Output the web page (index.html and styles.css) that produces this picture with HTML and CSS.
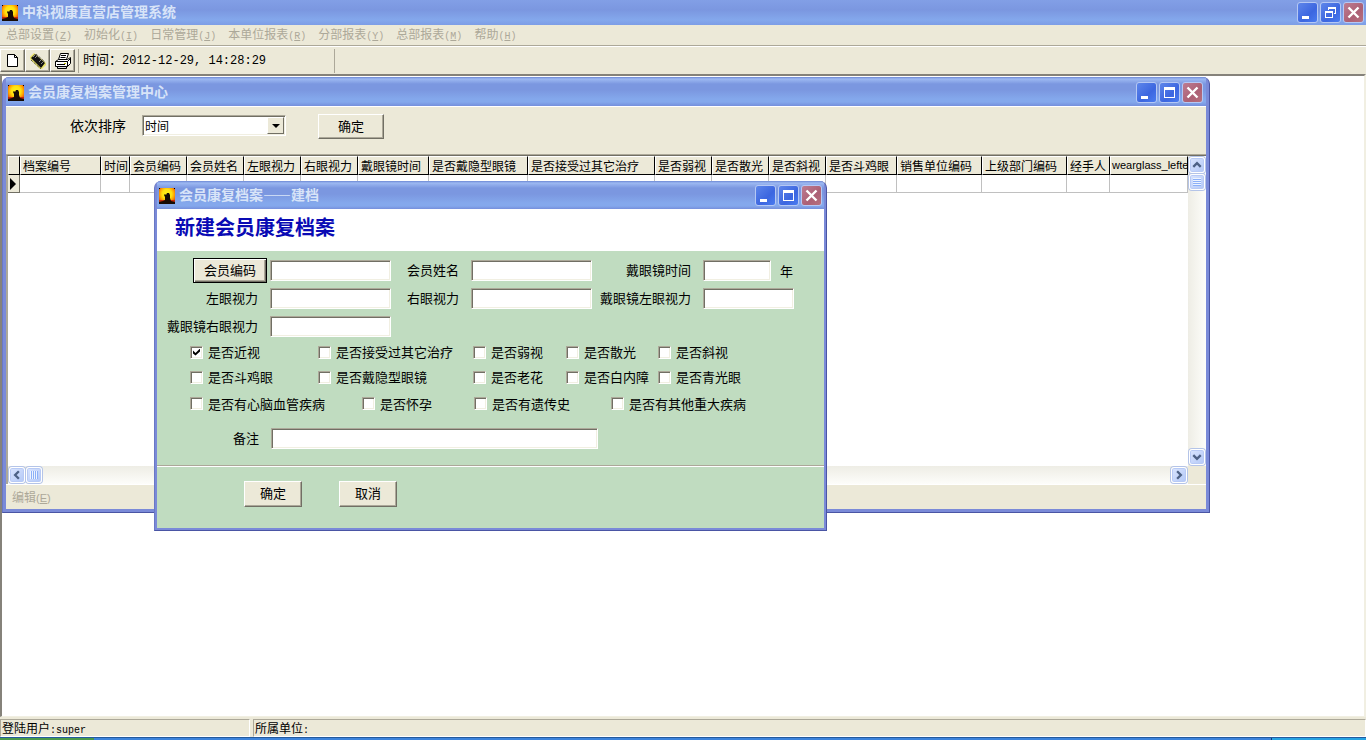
FILE: index.html
```html
<!DOCTYPE html>
<html lang="zh-CN">
<head>
<meta charset="utf-8">
<title>中科视康直营店管理系统</title>
<link rel="stylesheet" href="styles.css">
</head>
<body>
<svg class="defs" aria-hidden="true">
  <defs>
    <radialGradient id="sun" cx="50%" cy="38%" r="60%">
      <stop offset="0" stop-color="#fff21a"/><stop offset=".5" stop-color="#ffe010"/><stop offset=".75" stop-color="#ffa600"/><stop offset="1" stop-color="#e8520c"/>
    </radialGradient>
    <symbol id="logo" viewBox="0 0 16 16">
      <rect width="16" height="16" fill="url(#sun)"/>
      <path d="M0 12h16v4H0z" fill="#c22c0a"/>
      <path d="M0 14l4-1 2-1v-3l-1-2 1-1 1 1 1-2h2l1 2v3l1 3 4 1v2H0z" fill="#160b05"/>
      <path d="M0 0h1v1H0zM15 0h1v1h-1z" fill="#000"/>
    </symbol>
    <symbol id="min" viewBox="0 0 19 19"><path d="M4 13h7v3H4z" fill="#fff"/></symbol>
    <symbol id="max" viewBox="0 0 19 19"><path d="M4 4h11v11H4zM5 7v7h9V7z" fill="#fff" fill-rule="evenodd"/></symbol>
    <symbol id="restore" viewBox="0 0 19 19"><path d="M7 4h8v7h-2v-1h1V6H8v1H7zM4 8h8v7H4zM5 10v4h6v-4z" fill="#fff" fill-rule="evenodd"/></symbol>
    <symbol id="close" viewBox="0 0 19 19"><path d="M4.500 4.500l10 10M14.500 4.500l-10 10" stroke="#fff" stroke-width="2.400"/></symbol>
    <symbol id="chev" viewBox="0 0 15 15"><path d="M3.500 9.500l4-4 4 4" fill="none" stroke="#4d6185" stroke-width="2.500"/></symbol>
  </defs>
</svg>
<div class="app">
  <header class="titlebar titlebar-main">
    <svg class="logo"><use href="#logo"/></svg>
    <h1 class="caption">中科视康直营店管理系统</h1>
    <button class="winbtn" aria-label="最小化"><svg><use href="#min"/></svg></button>
    <button class="winbtn" aria-label="还原"><svg><use href="#restore"/></svg></button>
    <button class="winbtn winbtn-close" aria-label="关闭"><svg><use href="#close"/></svg></button>
  </header>
  <nav class="menubar">
    <button class="menu">总部设置<span class="key">(<u>Z</u>)</span></button>
    <button class="menu">初始化<span class="key">(<u>I</u>)</span></button>
    <button class="menu">日常管理<span class="key">(<u>J</u>)</span></button>
    <button class="menu">本单位报表<span class="key">(<u>R</u>)</span></button>
    <button class="menu">分部报表<span class="key">(<u>Y</u>)</span></button>
    <button class="menu">总部报表<span class="key">(<u>M</u>)</span></button>
    <button class="menu">帮助<span class="key">(<u>H</u>)</span></button>
  </nav>
  <div class="toolbar">
    <button class="tool" aria-label="新建"><svg viewBox="0 0 16 16"><path d="M2.500 1.500h7l3 3v9h-10z" fill="#fff" stroke="#000"/><path d="M9.500 1.500v3h3" fill="none" stroke="#000"/></svg></button>
    <button class="tool" aria-label="设备"><svg viewBox="0 0 16 16"><path d="M0 4l4-4 12 10v2l-4 4h-2L0 6z" fill="#e9e36a"/><path d="M1 5l4-4 10 9-4 5z" fill="#111"/><path d="M3 4l2-2M5 5l2-2M9 9l2-2M11 11l2-2" stroke="#888"/><path d="M1 7l10 9M6 1l9 8" stroke="#222" stroke-dasharray="1 1"/></svg></button>
    <button class="tool" aria-label="打印"><svg class="printer" viewBox="0 0 18 16"><path d="M4.500 6.500l2-6h8l-2 6zM7 2.500h5M6.500 4.500h5" fill="#fff" stroke="#000"/><path d="M1.500 8.500l3-2h9l3-2v6l-3 3h-12z" fill="#fff" stroke="#000"/><path d="M1.500 8.500h12v5M13.500 8.500l3-3M3 11.500h8" fill="none" stroke="#000"/><path d="M3.500 13.500h9v2h-9z" fill="#ddd" stroke="#000"/><path d="M10 10h2v1h-2z" fill="#cc0"/></svg></button>
    <div class="clock">时间：<span class="clock-value">2012-12-29, 14:28:29</span></div>
  </div>
  <main class="desktop">
    <section class="window window-records">
      <header class="titlebar">
        <svg class="logo"><use href="#logo"/></svg>
        <h2 class="caption">会员康复档案管理中心</h2>
        <button class="winbtn" aria-label="最小化"><svg><use href="#min"/></svg></button>
        <button class="winbtn" aria-label="最大化"><svg><use href="#max"/></svg></button>
        <button class="winbtn winbtn-close" aria-label="关闭"><svg><use href="#close"/></svg></button>
      </header>
      <div class="sortbar">
        <label class="sort-label" for="sort">依次排序</label>
        <div class="combo">
          <select id="sort"><option>时间</option></select>
          <span class="combo-arrow"></span>
        </div>
        <button class="btn sort-ok">确定</button>
      </div>
      <div class="grid">
        <div class="grid-body">
          <table class="records">
            <colgroup>
              <col class="c11"><col class="c81"><col class="c29"><col class="c57"><col class="c57"><col class="c57"><col class="c57"><col class="c71"><col class="c99"><col class="c127"><col class="c57"><col class="c57"><col class="c57"><col class="c71"><col class="c85"><col class="c85"><col class="c43"><col>
            </colgroup>
            <thead>
              <tr><th></th><th>档案编号</th><th>时间</th><th>会员编码</th><th>会员姓名</th><th>左眼视力</th><th>右眼视力</th><th>戴眼镜时间</th><th>是否戴隐型眼镜</th><th>是否接受过其它治疗</th><th>是否弱视</th><th>是否散光</th><th>是否斜视</th><th>是否斗鸡眼</th><th>销售单位编码</th><th>上级部门编码</th><th>经手人</th><th class="narrow">wearglass_lefte</th></tr>
            </thead>
            <tbody>
              <tr><td class="marker"><span class="pointer"></span></td><td></td><td></td><td></td><td></td><td></td><td></td><td></td><td></td><td></td><td></td><td></td><td></td><td></td><td></td><td></td><td></td><td></td></tr>
            </tbody>
          </table>
        </div>
        <div class="vscroll">
          <button class="scrollbtn" aria-label="向上"><svg><use href="#chev"/></svg></button>
          <span class="thumb thumb-v"></span>
          <button class="scrollbtn scroll-end turn-down" aria-label="向下"><svg><use href="#chev"/></svg></button>
        </div>
        <div class="hscroll">
          <button class="scrollbtn turn-left" aria-label="向左"><svg><use href="#chev"/></svg></button>
          <span class="thumb thumb-h"></span>
          <button class="scrollbtn scroll-end turn-right" aria-label="向右"><svg><use href="#chev"/></svg></button>
        </div>
      </div>
      <footer class="editbar"><button class="menu">编辑<span class="latin">(<u>E</u>)</span></button></footer>
    </section>

    <section class="window window-new">
      <header class="titlebar">
        <svg class="logo"><use href="#logo"/></svg>
        <h2 class="caption">会员康复档案——建档</h2>
        <button class="winbtn" aria-label="最小化"><svg><use href="#min"/></svg></button>
        <button class="winbtn" aria-label="最大化"><svg><use href="#max"/></svg></button>
        <button class="winbtn winbtn-close" aria-label="关闭"><svg><use href="#close"/></svg></button>
      </header>
      <h3 class="banner">新建会员康复档案</h3>
      <form class="form">
        <div class="fields">
          <button type="button" class="btn btn-default" id="code-btn">会员编码</button>
          <input class="field" aria-labelledby="code-btn">
          <label for="name">会员姓名</label>
          <input class="field" id="name">
          <label for="years">戴眼镜时间</label>
          <div class="years"><input class="field" id="years"><span>年</span></div>
          <label for="left">左眼视力</label>
          <input class="field" id="left">
          <label for="right">右眼视力</label>
          <input class="field" id="right">
          <label for="gleft">戴眼镜左眼视力</label>
          <input class="field" id="gleft">
          <label for="gright">戴眼镜右眼视力</label>
          <input class="field" id="gright">
        </div>
        <div class="checks checks-five">
          <label><input type="checkbox" checked>是否近视</label>
          <label><input type="checkbox">是否接受过其它治疗</label>
          <label><input type="checkbox">是否弱视</label>
          <label><input type="checkbox">是否散光</label>
          <label><input type="checkbox">是否斜视</label>
          <label><input type="checkbox">是否斗鸡眼</label>
          <label><input type="checkbox">是否戴隐型眼镜</label>
          <label><input type="checkbox">是否老花</label>
          <label><input type="checkbox">是否白内障</label>
          <label><input type="checkbox">是否青光眼</label>
        </div>
        <div class="checks checks-four">
          <label><input type="checkbox">是否有心脑血管疾病</label>
          <label><input type="checkbox">是否怀孕</label>
          <label><input type="checkbox">是否有遗传史</label>
          <label><input type="checkbox">是否有其他重大疾病</label>
        </div>
        <div class="remark">
          <label for="remark">备注</label>
          <input class="field" id="remark">
        </div>
        <div class="actions">
          <button type="button" class="btn">确定</button>
          <button type="button" class="btn">取消</button>
        </div>
      </form>
    </section>
  </main>
  <footer class="statusbar">
    <div class="panel panel-user">登陆用户<span class="key">:super</span></div>
    <div class="panel panel-unit">所属单位<span class="key">:</span></div>
  </footer>
  <div class="taskbar"><span class="start"></span><span class="tray"></span></div>
</div>
</body>
</html>
```
FILE: styles.css
```css
* { box-sizing: border-box; }
body {
  margin: 0;
  font: 12px/16px "Noto Sans CJK SC", sans-serif;
  color: #000;
  background: #ece9d8;
}
button, input, select { font: inherit; color: inherit; margin: 0; padding: 0; border-radius: 0; }
button { border: 0; background: none; }
.defs { position: absolute; width: 0; height: 0; }
.app { display: flex; flex-direction: column; height: 100vh; overflow: hidden; }

/* title bars */
.titlebar {
  display: flex;
  align-items: center;
  gap: 2px;
  height: 29px;
  padding: 2px 3px 0 2px;
  background: linear-gradient(#6c87d4 0, #9db9f2 2px, #7b97e0 7px, #7b97e0 13px, #84a8ec 22px, #84a8ec 25px, #758fdc 100%);
}
.titlebar-main { height: 25px; padding: 0 2px; background: linear-gradient(#829fe6 0, #7b97e0 10px, #84a8ec 20px, #7d9de6 100%); }
.logo { width: 16px; height: 16px; flex: none; }
.caption { flex: 1; margin: 0 0 0 2px; padding-bottom: 3px; font-size: 14px; line-height: 18px; font-weight: 700; color: #d8e4f8; white-space: nowrap; }
.winbtn {
  width: 21px;
  height: 21px;
  flex: none;
  border: 1px solid #b5c8f4;
  border-radius: 3px;
  background: linear-gradient(135deg, #5e86ea, #3c66e0 60%, #4a7cf0);
}
.winbtn svg { display: block; width: 19px; height: 19px; }
.winbtn-close { background: linear-gradient(135deg, #bd7c92, #ac6075 60%, #b7707e); }

/* menu and toolbar */
.menubar { display: flex; gap: 12px; height: 21px; padding: 0 6px; border-bottom: 1px solid #aca899; background: #ece9d8; }
.menu { color: #aca899; white-space: nowrap; }
.key { font-family: "Liberation Mono", monospace; font-size: 10px; }
.latin { font-family: "Liberation Sans", sans-serif; font-size: 11px; }
.toolbar { display: flex; align-items: center; height: 28px; border-top: 1px solid #fff; background: #ece9d8; }
.tool {
  display: grid;
  place-items: center;
  width: 25px;
  height: 23px;
  border: 1px solid;
  border-color: #fff #716f64 #716f64 #fff;
  box-shadow: inset -1px -1px #aca899;
}
.tool svg { width: 16px; height: 16px; }
.tool .printer { width: 18px; }
.clock { width: 257px; margin-left: 3px; padding-left: 4px; border: 1px solid #aca899; border-width: 0 1px; font-size: 13px; line-height: 20px; padding-bottom: 2px; white-space: nowrap; }
.clock-value { font-family: "Liberation Mono", monospace; font-size: 12px; }

/* desktop holding free-floating windows */
.desktop { position: relative; flex: 1; overflow: hidden; background: #fff; border: solid; border-width: 2px 2px 1px 2px; border-color: #85827a #f1efe2 #f1efe2 #85827a; }
.window {
  position: absolute;
  display: flex;
  flex-direction: column;
  border: 1px solid;
  border-color: #6a84d4 #4a55a4 #4a55a4 #6a78c4;
  border-top: 0;
  border-radius: 7px 7px 0 0;
  overflow: hidden;
  background: #7a8ad8;
}
.window-records { left: 0; top: 1px; width: 1208px; height: 436px; padding: 0 3px 3px 3px; }
.window-new { left: 152px; top: 105px; width: 673px; padding: 0 2px 2px 2px; }
.window-new .titlebar { height: 28px; padding: 1px 2px 0 2px; }

/* controls */
.btn {
  height: 25px;
  padding-bottom: 2px;
  border: 1px solid;
  border-color: #fff #716f64 #716f64 #fff;
  box-shadow: inset -1px -1px #aca899;
  background: #ece9d8;
  font-size: 13px;
}
.field, .combo {
  height: 21px;
  border: 1px solid;
  border-color: #aca899 #fff #fff #aca899;
  box-shadow: inset 1px 1px #716f64, inset -1px -1px #f1efe2;
  background: #fff;
}
.field { width: 100%; min-width: 0; padding: 0 4px; outline: 0; font-size: 13px; }

.sortbar { display: flex; align-items: center; height: 49px; padding: 0 0 10px 64px; border-top: 1px solid #fff; border-bottom: 1px solid #aca899; background: #ece9d8; }
.sort-label { width: 72px; padding-bottom: 2px; font-size: 14px; }
.combo { display: flex; width: 144px; padding: 1px; }
.combo select { flex: 1; appearance: none; border: 0; background: none; outline: 0; line-height: 15px; padding-left: 1px; }
.combo-arrow { display: grid; place-items: center; width: 17px; border: 1px solid; border-color: #fff #716f64 #716f64 #fff; background: #ece9d8; pointer-events: none; }
.combo-arrow::after { content: ""; border: 4px solid transparent; border-top-color: #000; border-bottom: 0; }
.sort-ok { width: 66px; margin: 2px 0 0 32px; }

/* record grid */
.grid { flex: 1; display: grid; grid-template: 1fr 18px / 1fr 18px; border-top: 1px solid #716f64; border-left: 2px solid #aca899; min-height: 0; background: #ece9d8; }
.grid-body { background: #fff; overflow: hidden; }
.records { width: 100%; table-layout: fixed; border-collapse: separate; border-spacing: 0; }
.records th {
  height: 19px;
  padding: 0 0 1px 2px;
  border: 1px solid;
  border-color: #fff #000 #000 #fff;
  background: #ece9d8;
  font-weight: 400;
  line-height: 15px;
  text-align: left;
  white-space: nowrap;
  overflow: hidden;
}
.records .narrow { padding-left: 1px; font-family: "Liberation Sans", sans-serif; font-size: 11px; }
.records td { height: 18px; padding: 0; border: solid #c0c0c0; border-width: 0 1px 1px 0; }
.records .marker { background: #ece9d8; border-color: #716f64; }
.pointer { display: block; width: 0; margin-left: 2px; border: 6px solid transparent; border-left-color: #000; border-right: 0; }
.c11 { width: 12px; }
.c29 { width: 29px; }
.c43 { width: 43px; }
.c57 { width: 57px; }
.c71 { width: 71px; }
.c81 { width: 81px; }
.c85 { width: 85px; }
.c99 { width: 99px; }
.c127 { width: 127px; }

.vscroll, .hscroll { display: flex; gap: 1px; padding: 1px; background: linear-gradient(90deg, #eeede5, #fdfdfa); }
.vscroll { flex-direction: column; }
.hscroll { background: linear-gradient(#eeede5, #fdfdfa); }
.scrollbtn, .thumb { display: block; width: 16px; height: 16px; flex: none; border: 1px solid #fff; border-radius: 3px; background: linear-gradient(135deg, #dae5fe, #b3c8f7); box-shadow: inset 0 0 0 1px #b8caf5, 0 0 0 1px #b4c4e8; }
.scrollbtn svg { display: block; width: 14px; height: 14px; }
.scroll-end { margin-top: auto; }
.hscroll .scroll-end { margin: 0 0 0 auto; }
.turn-down svg { transform: rotate(180deg); }
.turn-left svg { transform: rotate(-90deg); }
.turn-right svg { transform: rotate(90deg); }
.thumb { display: grid; place-items: center; }
.thumb::after { content: ""; width: 8px; height: 8px; background: repeating-linear-gradient(#eef4fe 0 1px, #8cb0f8 1px 2px); }
.thumb-h::after { background: repeating-linear-gradient(90deg, #eef4fe 0 1px, #8cb0f8 1px 2px); }
.editbar { display: flex; height: 25px; padding-left: 6px; border-top: 1px solid #fff; background: #ece9d8; }

/* new record dialog */
.banner { margin: 0; height: 42px; padding-left: 18px; background: #fff; color: #0a0ab4; font-size: 20px; line-height: 36px; }
.form { background: #c0dcc0; font-size: 13px; line-height: 18px; }
.fields {
  display: grid;
  grid-template-columns: 110px 121px 74px 121px 105px 91px;
  grid-auto-rows: 25px;
  row-gap: 3px;
  column-gap: 3px;
  align-items: center;
  padding-top: 7px;
}
.fields > label { text-align: right; padding: 0 9px 2px 0; white-space: nowrap; }
.btn-default { width: 74px; justify-self: end; border: 1px solid #000; box-shadow: inset 1px 1px #fff, inset -1px -1px #716f64, inset -2px -2px #aca899; }
.years { display: flex; align-items: center; gap: 9px; }
.years .field { width: 68px; }
.checks { display: grid; grid-auto-rows: 25px; padding-left: 33px; }
.checks-five { grid-template-columns: 128px 155px 93px 92px 1fr; padding-top: 1px; }
.checks-four { grid-template-columns: 172px 112px 137px 1fr; grid-auto-rows: 28px; }
.checks label { display: flex; align-items: center; gap: 5px; padding-bottom: 1px; white-space: nowrap; }
.checks input {
  appearance: none;
  width: 13px;
  height: 13px;
  border: 1px solid;
  border-color: #aca899 #fff #fff #aca899;
  box-shadow: inset 1px 1px #716f64, inset -1px -1px #f1efe2;
  background: #fff;
}
.checks input:checked::after {
  content: "";
  display: block;
  width: 7px;
  height: 7px;
  margin: 2px;
  background: #000;
  clip-path: polygon(0 29%, 36% 64%, 100% 0, 100% 43%, 36% 100%, 0 71%);
}
.remark { display: flex; align-items: center; height: 40px; padding-left: 76px; }
.remark label { width: 38px; padding-bottom: 1px; }
.remark .field { width: 327px; }
.actions { display: flex; gap: 37px; height: 63px; margin-top: 7px; padding: 15px 0 0 87px; border-top: 1px solid #aca899; box-shadow: inset 0 1px #fff; }
.actions .btn { width: 58px; height: 26px; }

/* bottom bars */
.statusbar { display: flex; gap: 3px; height: 20px; padding-top: 2px; background: #ece9d8; }
.panel { padding-left: 1px; border: 1px solid; border-color: #aca899 #fff #fff #aca899; line-height: 15px; white-space: nowrap; }
.panel-user { width: 250px; }
.panel-unit { flex: 1; }
.taskbar { display: flex; justify-content: space-between; height: 3px; border-top: 1px solid #245a9c; background: #3d84dc; }
.start { width: 94px; background: #4a9a4c; }
.tray { width: 95px; background: #27a3e2; border-left: 1px solid #123c78; }
```
